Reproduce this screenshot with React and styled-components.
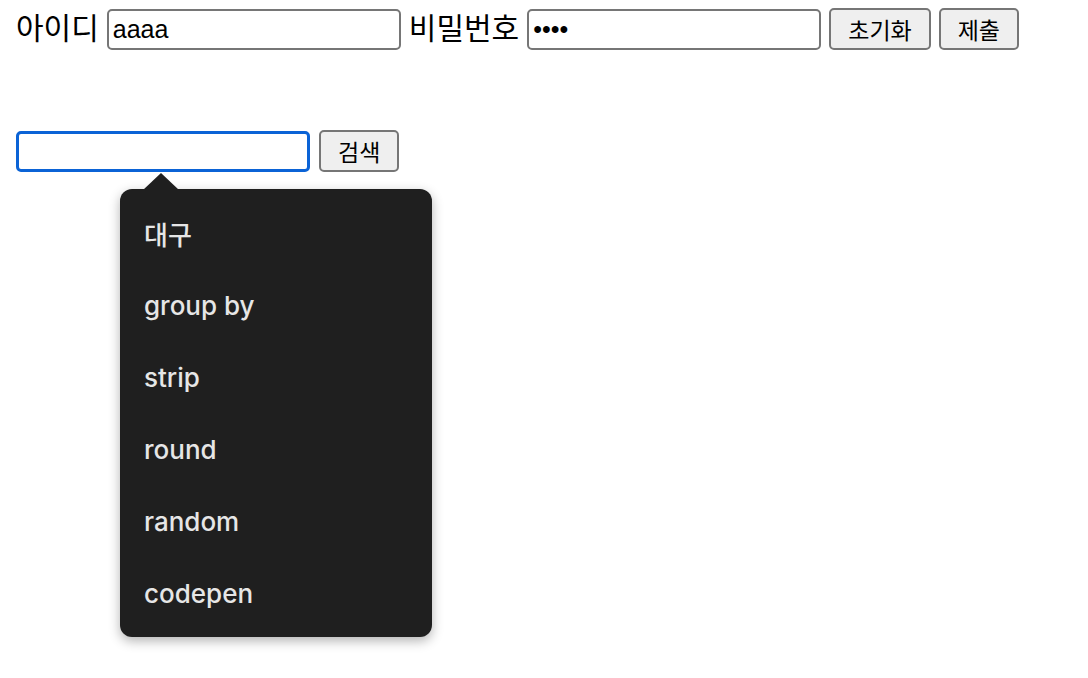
import React from 'react';
import styled, { createGlobalStyle } from 'styled-components';

const GlobalStyle = createGlobalStyle`
  html, body, #root {
    min-height: 100vh;
  }
  body {
    margin: 0;
    padding: 8px 16px;
    box-sizing: border-box;
    background: #fff;
    color: #000;
    font-family: "Liberation Sans", "Noto Sans CJK KR", sans-serif;
  }
`;

const LoginForm = styled.form`
  display: flex;
  align-items: center;
  gap: 8px;
  margin: 0;
`;

const Label = styled.label`
  font-family: "Noto Sans CJK KR", sans-serif;
  font-size: 30px;
  line-height: 41px;
  margin-top: -6px;
`;

const TextInput = styled.input`
  box-sizing: border-box;
  width: 294px;
  height: 41px;
  padding: 0 4px;
  border: ${p => (p.$focused ? '3px solid #0b63d6' : '2px solid #767676')};
  border-radius: 5px;
  font-family: "Liberation Sans", sans-serif;
  font-size: 25px;
  color: #000;
  background: #fff;
  outline: none;
`;

const Button = styled.button`
  box-sizing: border-box;
  height: 42px;
  padding: 0 17px;
  border: 2px solid #767676;
  border-radius: 5px;
  background: #efefef;
  color: #000;
  font-family: "Noto Sans CJK KR", sans-serif;
  font-size: 23px;
  font-weight: 400;
  cursor: pointer;
`;

const SearchRow = styled.div`
  position: relative;
  display: flex;
  align-items: center;
  gap: 9px;
  margin-top: 80px;
`;

const Dropdown = styled.ul`
  position: absolute;
  left: 104px;
  top: 59px;
  width: 312px;
  margin: 0;
  padding: 8px 0;
  list-style: none;
  background: #1f1f1f;
  border-radius: 12px;
  box-shadow: 0 4px 12px rgba(0, 0, 0, 0.3);

  &::before {
    content: '';
    position: absolute;
    left: 23px;
    top: -16px;
    border-left: 18px solid transparent;
    border-right: 18px solid transparent;
    border-bottom: 17px solid #1f1f1f;
  }
`;

const Option = styled.li`
  height: 72px;
  display: flex;
  align-items: center;
  padding-left: 24px;
  color: #e6e6e6;
  font-family: Inter, "Noto Sans CJK KR", sans-serif;
  font-size: 26px;
  font-weight: 500;
`;

const options = ['대구', 'group by', 'strip', 'round', 'random', 'codepen'];

export default function App() {
  return (
    <>
      <GlobalStyle />
      <LoginForm onSubmit={e => e.preventDefault()}>
        <Label>아이디</Label>
        <TextInput type="text" defaultValue="aaaa" />
        <Label>비밀번호</Label>
        <TextInput type="password" defaultValue="aaaa" />
        <Button type="reset">초기화</Button>
        <Button type="submit">제출</Button>
      </LoginForm>

      <SearchRow>
        <TextInput type="text" $focused />
        <Button type="button">검색</Button>
        <Dropdown>
          {options.map(opt => (
            <Option key={opt}>{opt}</Option>
          ))}
        </Dropdown>
      </SearchRow>
    </>
  );
}
